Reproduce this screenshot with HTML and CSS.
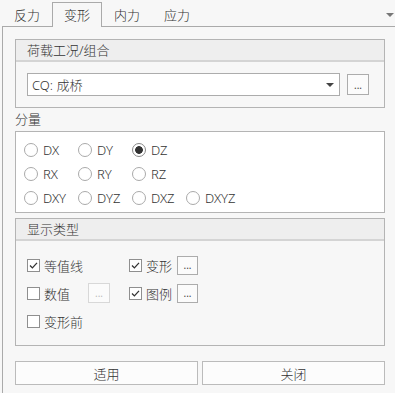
FILE: index.html
```html
<!DOCTYPE html>
<html lang="zh">
<head>
    <meta charset="UTF-8">
    <title>变形</title>
    <link rel="stylesheet" href="styles.css">
</head>
<body>
    <div class="tabs">
        <div class="tab">反力</div>
        <div class="tab active">变形</div>
        <div class="tab">内力</div>
        <div class="tab">应力</div>
        <div class="tab-menu"></div>
    </div>
    <div class="pane">
        <div class="group">
            <div class="group-head">荷载工况/组合</div>
            <div class="combo-row">
                <div class="combo"><span>CQ: 成桥</span><i class="caret"></i></div>
                <button class="dots">...</button>
            </div>
        </div>
        <div class="label">分量</div>
        <div class="radios">
            <div class="radio"><i></i>DX</div>
            <div class="radio"><i></i>DY</div>
            <div class="radio on"><i></i>DZ</div>
            <div></div>
            <div class="radio"><i></i>RX</div>
            <div class="radio"><i></i>RY</div>
            <div class="radio"><i></i>RZ</div>
            <div></div>
            <div class="radio"><i></i>DXY</div>
            <div class="radio"><i></i>DYZ</div>
            <div class="radio"><i></i>DXZ</div>
            <div class="radio"><i></i>DXYZ</div>
        </div>
        <div class="group second">
            <div class="group-head">显示类型</div>
            <div class="checks">
                <div class="check"><i><svg viewBox="0 0 11 11"><path d="M2 5.5l2.4 2.4 4.6-5"/></svg></i>等值线</div>
                <div class="check"><i><svg viewBox="0 0 11 11"><path d="M2 5.5l2.4 2.4 4.6-5"/></svg></i>变形<button class="dots sm">...</button></div>
                <div class="check"><i></i>数值<button class="dots off">...</button></div>
                <div class="check"><i><svg viewBox="0 0 11 11"><path d="M2 5.5l2.4 2.4 4.6-5"/></svg></i>图例<button class="dots sm">...</button></div>
                <div class="check"><i></i>变形前</div>
            </div>
        </div>
        <div class="actions">
            <button>适用</button>
            <button>关闭</button>
        </div>
    </div>
</body>
</html>
```

FILE: styles.css
```css
* {
    box-sizing: border-box;
    margin: 0;
    padding: 0;
}
body {
    width: 395px;
    height: 393px;
    overflow: hidden;
    background: #f7f7f7;
    font-family: "Noto Sans", "Noto Sans CJK SC", sans-serif;
    font-size: 13px;
    font-weight: 300;
    color: #333;
}
button {
    font-family: inherit;
    font-size: 13px;
    font-weight: inherit;
    color: #333;
}
.tabs {
    display: flex;
    align-items: flex-end;
    height: 27px;
    margin-bottom: -1px;
    padding-left: 2px;
    position: relative;
    z-index: 1;
}
.tab {
    width: 50px;
    height: 25px;
    line-height: 24px;
    text-align: center;
    border: 1px solid transparent;
    border-bottom: none;
}
.tab.active {
    background: #f7f7f7;
    border-color: #aaa;
}
.tab-menu {
    margin-left: auto;
    margin-right: 1px;
    align-self: flex-start;
    margin-top: 13px;
    width: 0;
    border-left: 4px solid transparent;
    border-right: 4px solid transparent;
    border-top: 4px solid #777;
}
.pane {
    margin-left: 2px;
    height: 367px;
    border-left: 1px solid #aaa;
    border-top: 1px solid #aaa;
    padding: 12px 10px 0 12px;
}
.group {
    border: 1px solid #b4b4b4;
}
.group.second {
    margin-top: 5px;
}
.group-head {
    height: 22px;
    line-height: 20px;
    padding-left: 11px;
    background: #eee;
    border-bottom: 2px solid #d4d4d4;
}
.combo-row {
    display: flex;
    align-items: center;
    padding: 11px 15px 11px 11px;
}
.combo {
    flex: 1;
    height: 23px;
    display: flex;
    align-items: center;
    justify-content: space-between;
    padding: 0 5px 0 4px;
    background: #fff;
    border: 1px solid #acacac;
}
.caret {
    width: 0;
    border-left: 4px solid transparent;
    border-right: 4px solid transparent;
    border-top: 4px solid #444;
}
.dots {
    width: 22px;
    height: 21px;
    margin-left: 7px;
    border: 1px solid #acacac;
    background: #fbfbfb;
    font-size: 10px;
    font-weight: 400;
    line-height: 16px;
    color: #444;
}
.dots.sm {
    width: 21px;
    height: 19px;
    margin-left: 5px;
    line-height: 14px;
}
.dots.off {
    height: 20px;
    margin-left: 18px;
    border-color: #d8d8d8;
    color: #bbb;
    line-height: 15px;
}
.label {
    height: 23px;
    line-height: 23px;
}
.radios {
    display: grid;
    grid-template-columns: repeat(4, 54px);
    grid-auto-rows: 24px;
    padding: 6px 0 2px 8px;
    background: #fff;
    border: 1px solid #b4b4b4;
}
.radio {
    display: flex;
    align-items: center;
    gap: 5px;
}
.radio i {
    width: 14px;
    height: 14px;
    border: 1px solid #aaa;
    border-radius: 50%;
    background: #fff;
}
.radio.on i {
    border-color: #888;
    background: radial-gradient(circle, #333 0 3.5px, #fff 4.2px);
}
.checks {
    display: grid;
    grid-template-columns: 102px auto;
    grid-auto-rows: 28px;
    padding: 10px 11px;
}
.check {
    display: flex;
    align-items: center;
}
.check i {
    width: 13px;
    height: 13px;
    margin-right: 4px;
    border: 1px solid #8f8f8f;
    background: #fff;
    display: flex;
}
.check svg {
    width: 11px;
    height: 11px;
}
.check path {
    fill: none;
    stroke: #333;
    stroke-width: 1.3;
}
.actions {
    display: flex;
    gap: 4px;
    margin-top: 15px;
}
.actions button {
    flex: 1;
    height: 24px;
    border: 1px solid #bbb;
    background: #fcfcfc;
}
```
